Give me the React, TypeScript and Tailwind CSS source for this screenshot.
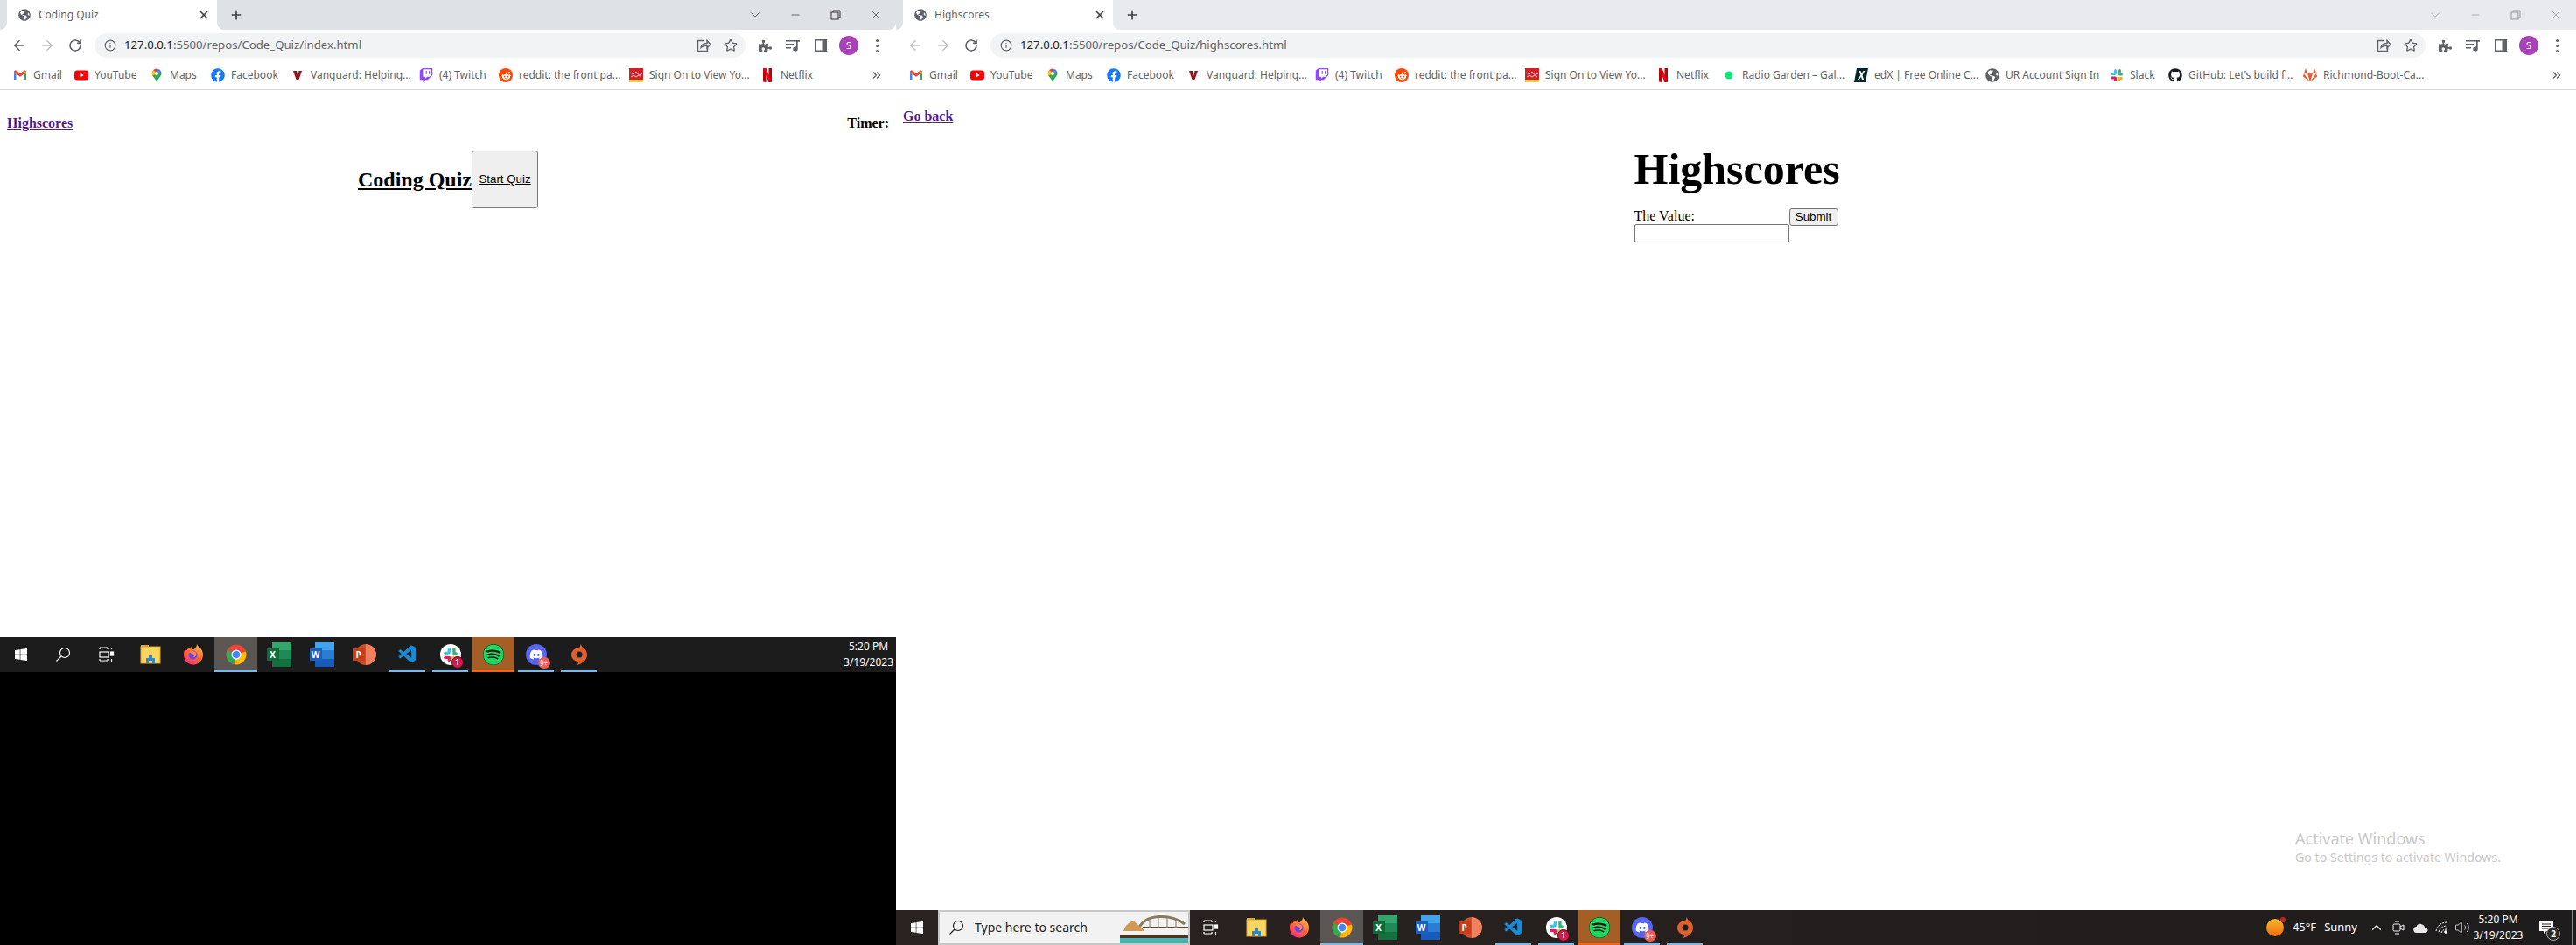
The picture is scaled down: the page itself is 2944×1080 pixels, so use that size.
import type { ReactNode } from 'react'
import { ArrowLeft, ArrowRight, ChevronDown, ChevronUp, ChevronsRight, Info, Minus, Plus, RotateCw, Star, Volume2, X } from 'lucide-react'
import { FaDiscord, FaFacebook, FaGithub, FaGitlab, FaGlobeAmericas, FaPuzzlePiece, FaRedditAlien, FaSpotify, FaTwitch, FaWindows } from 'react-icons/fa'
import { VscVscode } from 'react-icons/vsc'

function Gmail() {
  return (
    <svg width="16" height="16" viewBox="0 0 16 16">
      <path d="M1 13V4l2.500 1.500V13z" fill="#4285f4" />
      <path d="M12.500 13V5.500L15 4v9z" fill="#34a853" />
      <path d="M1 4.500C1 2.500 2.800 2 4 3l4 3 4-3c1.200-1 3-.5 3 1.500L12.500 6.500 8 9.800 3.500 6.500z" fill="#ea4335" />
      <path d="M12.500 3.300 15 4.500l-2.500 2z" fill="#fbbc04" />
    </svg>
  )
}

function YouTube() {
  return (
    <svg width="16" height="16" viewBox="0 0 16 16">
      <rect y="2.500" width="16" height="11" rx="3" fill="#ff0000" />
      <path d="M6.500 5.500v5l4.200-2.500z" fill="#fff" />
    </svg>
  )
}

function MapsPin() {
  return (
    <svg width="16" height="16" viewBox="0 0 16 16">
      <path d="M8 0.500a5.500 5.500 0 0 1 5.500 5.500L8 8z" fill="#4285f4" />
      <path d="M8 0.500A5.500 5.500 0 0 0 4 2.300L8 6z" fill="#ea4335" />
      <path d="M4 2.300A5.500 5.500 0 0 0 2.500 6c0 1 .3 1.800.8 2.600L8 6z" fill="#fbbc04" />
      <path d="M3.300 8.600 8 6l5.500 0c0 3-3.800 6-5.500 9.500C7 13 5 11 3.300 8.600z" fill="#34a853" />
      <circle cx="8" cy="6" r="2" fill="#fff" />
    </svg>
  )
}

function Vanguard() {
  return (
    <svg width="16" height="16" viewBox="0 0 16 16">
      <path d="M3 3h4l1.200 5.500L9.500 3H13l-3.500 10h-3z" fill="#96151d" />
    </svg>
  )
}

function SignOn() {
  return (
    <svg width="16" height="16" viewBox="0 0 16 16">
      <rect width="16" height="13" fill="#d71e28" />
      <rect y="13" width="16" height="3" fill="#ffcd41" />
      <path d="M1 5l4 2 3-3 3 4 4-2M2 10l3-2 3 2 3-2 3 2" stroke="#f7c9cb" strokeWidth="1" fill="none" />
    </svg>
  )
}

function NetflixN() {
  return (
    <svg width="16" height="16" viewBox="0 0 16 16">
      <path d="M3 0h3.500v16L3 15.500z" fill="#b1060f" />
      <path d="M9.500 0H13v15.500L9.500 16z" fill="#b1060f" />
      <path d="M3 0h3.500l6.500 15.500L9.500 16z" fill="#e50914" />
    </svg>
  )
}

function RadioDot() {
  return (
    <svg width="16" height="16" viewBox="0 0 16 16">
      <circle cx="8" cy="8" r="4.500" fill="#0ee57c" />
    </svg>
  )
}

function Edx() {
  return (
    <svg width="16" height="16" viewBox="0 0 16 16">
      <path d="M3 0h13l-3 16H0z" fill="#02262b" />
      <path d="M5.500 3h2l1 3 2-3h2L9.500 8l1.500 5H9L8 9.800 5.800 13h-2l3.600-5z" fill="#fff" />
    </svg>
  )
}

function SlackMark({ size = 16 }: { size?: number }) {
  return (
    <svg width={size} height={size} viewBox="0 0 16 16">
      <rect x="6" y="1" width="3" height="6" rx="1.500" fill="#36c5f0" transform="translate(-1 0)" />
      <rect x="1" y="5" width="6" height="3" rx="1.500" fill="#36c5f0" />
      <rect x="10" y="1" width="3" height="6" rx="1.500" fill="#2eb67d" />
      <rect x="10" y="5.500" width="5" height="3" rx="1.500" fill="#2eb67d" />
      <rect x="9" y="10" width="6" height="3" rx="1.500" fill="#ecb22e" />
      <rect x="9" y="10" width="3" height="5" rx="1.500" fill="#ecb22e" />
      <rect x="1" y="9.500" width="6" height="3" rx="1.500" fill="#e01e5a" />
      <rect x="5" y="9.500" width="3" height="5.500" rx="1.500" fill="#e01e5a" />
    </svg>
  )
}

function Share() {
  return (
    <svg width="18" height="18" viewBox="0 0 18 18" fill="none" stroke="#5f6368" strokeWidth="1.400">
      <path d="M9 3.500H2.500v12h11V11" />
      <path d="M6 11.500c.5-3.500 3-5 7-5V3.500l4 4.300-4 4V9c-3 0-5 .7-7 2.500z" />
    </svg>
  )
}

function MediaIcon() {
  return (
    <svg width="18" height="18" viewBox="0 0 18 18" fill="#5f6368">
      <rect x="1" y="3" width="12" height="1.500" />
      <rect x="1" y="7" width="9" height="1.500" />
      <rect x="1" y="11" width="6" height="1.500" />
      <path d="M13 3h4v1.800h-2.300V13a2.700 2.700 0 1 1-1.700-2.500z" />
    </svg>
  )
}

function SidePanel() {
  return (
    <svg width="16" height="16" viewBox="0 0 16 16">
      <rect x="1" y="1" width="14" height="14" fill="#5f6368" />
      <rect x="2.500" y="2.500" width="7" height="11" fill="#fff" />
    </svg>
  )
}

function Restore({ color }: { color: string }) {
  return (
    <svg width="12" height="12" viewBox="0 0 12 12" fill="none" stroke={color} strokeWidth="1">
      <rect x="1" y="3" width="8" height="8" />
      <path d="M3 3V1h8v8H9" />
    </svg>
  )
}

const BOOKMARKS_LEFT = [
  { name: 'Gmail', icon: <Gmail />, width: 'w-[70px]' },
  { name: 'YouTube', icon: <YouTube />, width: 'w-[86px]' },
  { name: 'Maps', icon: <MapsPin />, width: 'w-[70px]' },
  { name: 'Facebook', icon: <FaFacebook size={16} color="#1877f2" />, width: 'w-[91px]' },
  { name: 'Vanguard: Helping...', icon: <Vanguard />, width: 'w-[147px]' },
  { name: '(4) Twitch', icon: <FaTwitch size={16} color="#9146ff" />, width: 'w-[91px]' },
  { name: 'reddit: the front pa...', icon: <div className="w-4 h-4 rounded-full bg-[#ff4500] flex items-center justify-center"><FaRedditAlien size={11} color="#fff" /></div>, width: 'w-[149px]' },
  { name: 'Sign On to View Yo...', icon: <SignOn />, width: 'w-[150px]' },
  { name: 'Netflix', icon: <NetflixN />, width: 'w-[75px]' },
]

const BOOKMARKS_RIGHT = [
  { name: 'Radio Garden – Gal...', icon: <RadioDot />, width: 'w-[151px]' },
  { name: 'edX | Free Online C...', icon: <Edx />, width: 'w-[150px]' },
  { name: 'UR Account Sign In', icon: <FaGlobeAmericas size={16} color="#5f6368" />, width: 'w-[142px]' },
  { name: 'Slack', icon: <SlackMark />, width: 'w-[67px]' },
  { name: 'GitHub: Let’s build f...', icon: <FaGithub size={16} color="#161b22" />, width: 'w-[154px]' },
  { name: 'Richmond-Boot-Ca...', icon: <FaGitlab size={16} color="#e8582a" />, width: 'w-[150px]' },
]

function Browser({ title, url, active, wide, children }: { title: string; url: string; active: boolean; wide: boolean; children: ReactNode }) {
  const control = active ? '#333333' : '#9a9a9a'
  const items = wide ? [...BOOKMARKS_LEFT, ...BOOKMARKS_RIGHT] : BOOKMARKS_LEFT
  return (
    <div className="flex-1 flex flex-col bg-white font-['Noto_Sans',sans-serif] min-h-0">
      <div className="h-[34px] flex bg-white">
        <div className="w-2 bg-[#dee1e6] rounded-br-lg" />
        <div className="w-[240px] flex items-center bg-white rounded-t-lg pl-[13px] pr-2">
          <FaGlobeAmericas size={14} color="#5f6368" />
          <span className="ml-[9px] text-xs text-[#5f6368] flex-1">{title}</span>
          <X size={14} color="#444746" strokeWidth={3} />
        </div>
        <div className={active ? 'flex-1 flex items-center bg-[#dee1e6] rounded-bl-lg rounded-br-lg' : 'flex-1 flex items-center bg-[#e8eaed] rounded-bl-lg'}>
          <div className="w-11 flex justify-center">
            <Plus size={16} color="#3c4043" strokeWidth={2.500} />
          </div>
          <div className="ml-auto flex items-center">
            <div className="w-[46px] flex justify-center"><ChevronDown size={18} color={control} strokeWidth={1} /></div>
            <div className="w-[46px] flex justify-center"><Minus size={14} color={control} strokeWidth={1.200} /></div>
            <div className="w-[46px] flex justify-center"><Restore color={control} /></div>
            <div className="w-[46px] flex justify-center"><X size={16} color={control} strokeWidth={1} /></div>
          </div>
        </div>
      </div>

      <div className="h-9 flex items-center pl-[6px] pr-[6px]">
        <div className="w-8 flex justify-center"><ArrowLeft size={18} color={active ? '#5f6368' : '#bdc1c6'} strokeWidth={2} /></div>
        <div className="w-8 flex justify-center"><ArrowRight size={18} color="#bdc1c6" strokeWidth={2} /></div>
        <div className="w-8 flex justify-center"><RotateCw size={16} color="#5f6368" strokeWidth={2.500} /></div>
        <div className="ml-[6px] flex-1 h-7 rounded-full bg-[#f1f3f4] flex items-center pl-[11px] pr-[9px]">
          <Info size={14} color="#5f6368" strokeWidth={2} />
          <span className="ml-[9px] text-[13.200px] text-[#5f6368]">
            <span className="text-[#202124]">127.0.0.1</span>{url}
          </span>
          <div className="ml-auto flex items-center gap-[14px]">
            <Share />
            <Star size={16} color="#5f6368" strokeWidth={2} />
          </div>
        </div>
        <div className="ml-[6px] w-8 flex justify-center"><FaPuzzlePiece size={15} color="#5f6368" /></div>
        <div className="w-8 flex justify-center"><MediaIcon /></div>
        <div className="w-8 flex justify-center"><SidePanel /></div>
        <div className="w-8 flex justify-center">
          <div className="w-[22px] h-[22px] rounded-full bg-[#a742b8] text-white text-[11px] flex items-center justify-center">S</div>
        </div>
        <div className="w-8 flex flex-col items-center gap-[3px]">
          <div className="w-[3px] h-[3px] rounded-full bg-[#5f6368]" />
          <div className="w-[3px] h-[3px] rounded-full bg-[#5f6368]" />
          <div className="w-[3px] h-[3px] rounded-full bg-[#5f6368]" />
        </div>
      </div>

      <div className="h-[33px] flex items-center pl-[15px] pr-[15px] border-b border-[#dadce0]">
        {items.map((item) => (
          <div key={item.name} className={`${item.width} flex-none flex items-center gap-[7px]`}>
            <div className="w-4 h-4 flex-none">{item.icon}</div>
            <span className="text-xs text-[#5f6368] whitespace-nowrap">{item.name}</span>
          </div>
        ))}
        <div className="ml-auto">
          <ChevronsRight size={14} color="#5f6368" strokeWidth={2.500} />
        </div>
      </div>

      {children}
    </div>
  )
}

function Chrome() {
  return (
    <svg width="24" height="24" viewBox="0 0 24 24">
      <circle cx="12" cy="12" r="11.500" fill="#ea4335" />
      <path d="M12 12 2 6.500A11.500 11.500 0 0 0 10 23.300z" fill="#34a853" />
      <path d="M12 12l10.800-3.500A11.500 11.500 0 0 1 10 23.300z" fill="#fbbc04" />
      <circle cx="12" cy="12" r="5.500" fill="#fff" />
      <circle cx="12" cy="12" r="4.300" fill="#4285f4" />
    </svg>
  )
}

function Firefox() {
  return (
    <svg width="24" height="24" viewBox="0 0 24 24">
      <defs>
        <linearGradient id="fx" x1="0.800" y1="0" x2="0.200" y2="1">
          <stop offset="0" stopColor="#ffbd4f" />
          <stop offset="0.500" stopColor="#ff6a2b" />
          <stop offset="1" stopColor="#ff2f7e" />
        </linearGradient>
      </defs>
      <path d="M16 0c.5 2 3 3.500 5 6 2.500 3.500 2.500 8 1 11-2 4-6 6.500-10 6.500C6 23.500 1 19 1 12c0-2 .5-5 2-7 0 1 .5 2 1 2.500C5.500 5 8 3.500 10 3.500c-.5 1 0 2 1 2.500 2 .5 5-2 5-6z" fill="url(#fx)" />
      <circle cx="11.500" cy="12.500" r="5" fill="#7542e5" />
      <path d="M7 9c3-2 7-1 8 1 1 3-1 5-3 5 2-2 0-4-2-4z" fill="#ff8a3d" />
    </svg>
  )
}

function Explorer() {
  return (
    <svg width="24" height="22" viewBox="0 0 24 22">
      <path d="M1 0h9v2H1z" fill="#e0a526" />
      <rect x="1" y="2" width="22" height="19" fill="#fcd462" />
      <rect x="1" y="2" width="22" height="19" fill="none" stroke="#d8a637" />
      <path d="M7 21v-6h3v-3h4v3h3v6h-3v-3h-4v3z" fill="#2a87d3" />
    </svg>
  )
}

function Office({ back, letter, tile }: { back: string[]; letter: string; tile: string }) {
  return (
    <div className="relative w-7 h-7 flex-none">
      <div className="absolute left-[6px] top-0 right-0 bottom-0 flex flex-col">
        {back.map((c) => (
          <div key={c} className={`flex-1 ${c}`} />
        ))}
      </div>
      <div className={`absolute left-0 top-[7px] w-[14px] h-[14px] flex items-center justify-center text-white text-[10px] font-bold ${tile}`}>{letter}</div>
    </div>
  )
}

function Powerpoint() {
  return (
    <div className="relative w-7 h-7 flex-none">
      <div className="absolute left-[3px] top-[2px] w-6 h-6 rounded-full bg-[linear-gradient(90deg,#c8512e_50%,#f0805e_50%)]" />
      <div className="absolute left-0 top-[7px] w-[14px] h-[14px] flex items-center justify-center text-white text-[10px] font-bold bg-[#c43e1c]">P</div>
    </div>
  )
}

function SearchGlass({ color }: { color: string }) {
  return (
    <svg width="18" height="18" viewBox="0 0 18 18" fill="none" stroke={color} strokeWidth="1.200">
      <circle cx="11" cy="7" r="5.500" />
      <path d="M7 11 1.500 16.500" />
    </svg>
  )
}

function TaskView() {
  return (
    <svg width="18" height="18" viewBox="0 0 18 18" fill="none" stroke="#fff" strokeWidth="1.200">
      <path d="M1 1h9M10 1v2M1 3V1" />
      <rect x="1" y="6" width="10" height="6" />
      <path d="M1 16h9M10 14v2M1 14v2" />
      <rect x="13.500" y="6" width="3" height="4" fill="#fff" />
      <path d="M14.500 1v2M14.500 14v3" />
    </svg>
  )
}

function Slot({ children, bar, highlight, spotify }: { children: ReactNode; bar?: boolean; highlight?: boolean; spotify?: boolean }) {
  return (
    <div className={`relative w-[49px] h-10 flex-none flex items-center justify-center ${highlight ? 'bg-[#5a5654]' : ''} ${spotify ? 'bg-[#a55e26]' : ''}`}>
      {children}
      {bar && !highlight && !spotify && <div className="absolute bottom-0 left-1 right-1 h-[2px] bg-[#76b9ed]" />}
      {highlight && <div className="absolute bottom-0 left-0 right-0 h-[2px] bg-[#76b9ed]" />}
      {spotify && <div className="absolute bottom-0 left-0 right-0 h-[2px] bg-[#f7630c]" />}
    </div>
  )
}

function AppIcons() {
  return (
    <>
      <Slot><Explorer /></Slot>
      <Slot><Firefox /></Slot>
      <Slot highlight><Chrome /></Slot>
      <Slot><Office letter="X" tile="bg-[#0f6b3a]" back={['bg-[#33a56f]', 'bg-[#1f8a57]', 'bg-[#14703f]']} /></Slot>
      <Slot><Office letter="W" tile="bg-[#1b5ebe]" back={['bg-[#41a5ee]', 'bg-[#2b7cd3]', 'bg-[#185abd]']} /></Slot>
      <Slot><Powerpoint /></Slot>
      <Slot bar><VscVscode size={24} color="#1a8ad4" /></Slot>
      <Slot bar>
        <div className="relative w-6 h-6 rounded-full bg-white flex items-center justify-center">
          <SlackMark size={18} />
          <div className="absolute -right-[3px] -bottom-[4px] w-[14px] h-[14px] rounded-full bg-[#d01d4f] border border-[#4a0a20] text-white text-[9px] flex items-center justify-center">1</div>
        </div>
      </Slot>
      <Slot spotify>
        <div className="w-6 h-6 rounded-full bg-[#1ed760] flex items-center justify-center">
          <FaSpotify size={24} color="#1ed760" className="bg-[#191414] rounded-full" />
        </div>
      </Slot>
      <Slot bar>
        <div className="relative w-6 h-6 rounded-full bg-[#5865f2] flex items-center justify-center">
          <FaDiscord size={16} color="#fff" />
          <div className="absolute -right-[4px] -bottom-[4px] w-[14px] h-[13px] rounded-full bg-[#ed5a5a] text-white text-[8px] flex items-center justify-center">9+</div>
        </div>
      </Slot>
      <Slot bar>
        <svg width="20" height="24" viewBox="0 0 20 24">
          <path d="M11 0c.5 2 0 3-1 4C5 4 1 8 1 12c0 5 4 8 8 8 0 1.500-.5 3-1.500 4 5-1 11.500-5 11.500-12 0-4-3-8-6-9C13 2 12 1 11 0z" fill="#e0602c" />
          <circle cx="10" cy="12" r="3.500" fill="#1f1c1c" />
        </svg>
      </Slot>
    </>
  )
}

function Clock() {
  return (
    <div className="flex flex-col items-center text-xs text-white leading-[18px]">
      <span>5:20 PM</span>
      <span>3/19/2023</span>
    </div>
  )
}

function OperaHouse() {
  return (
    <svg width="78" height="36" viewBox="0 0 78 36">
      <path d="M22 18C30 2 58 2 74 14" fill="none" stroke="#8a7a60" strokeWidth="3" />
      <path d="M26 18h52" stroke="#5a4a35" strokeWidth="2" />
      <path d="M34 8v10M44 5v13M54 5v13M64 8v10" stroke="#8a7a60" strokeWidth="1" />
      <path d="M4 22 C6 14 14 10 16 10 C18 14 26 18 28 22z" fill="#d09a55" />
      <path d="M0 26h78v4H0z" fill="#4a3520" />
      <path d="M0 30h78v6H0z" fill="#44b5b0" />
    </svg>
  )
}

export default function App() {
  return (
    <div className="flex w-[2944px] h-[1080px] overflow-hidden bg-white">
      <div className="w-[1024px] flex-none flex flex-col bg-black">
        <Browser title="Coding Quiz" url=":5500/repos/Code_Quiz/index.html" active wide={false}>
          <div className="flex-1 bg-white font-['Liberation_Serif',serif] text-black">
            <div className="flex justify-between px-2 pt-[29px] text-base leading-[18px] font-bold">
              <a className="underline text-[#551a8b]">Highscores</a>
              <span>Timer:</span>
            </div>
            <div className="mt-[22px] flex items-center justify-center">
              <h2 className="text-2xl font-bold underline">Coding Quiz</h2>
              <button className="w-[76px] h-[66px] bg-[#efefef] border border-[#767676] rounded-[3px] font-['Liberation_Sans',sans-serif] text-[13.333px] underline">Start Quiz</button>
            </div>
          </div>
        </Browser>
        <div className="h-10 flex-none flex items-center bg-[#1c1c1c] font-['Noto_Sans',sans-serif]">
          <div className="w-12 flex justify-center"><FaWindows size={16} color="#fff" /></div>
          <div className="w-12 flex justify-center"><SearchGlass color="#fff" /></div>
          <div className="w-[51px] flex justify-center"><TaskView /></div>
          <AppIcons />
          <div className="ml-auto pr-[3px]"><Clock /></div>
        </div>
        <div className="h-[312px] flex-none bg-black" />
      </div>

      <div className="relative flex-1 flex flex-col">
        <Browser title="Highscores" url=":5500/repos/Code_Quiz/highscores.html" active={false} wide>
          <div className="flex-1 bg-white font-['Liberation_Serif',serif] text-black">
            <div className="px-2 pt-[21px] text-base leading-[18px] font-bold">
              <a className="underline text-[#551a8b]">Go back</a>
            </div>
            <div className="mt-[24px] flex justify-center">
              <div className="w-[233px]">
                <h1 className="text-[50px] leading-[55px] font-bold whitespace-nowrap">Highscores</h1>
                <div className="mt-[17px] flex items-start">
                  <label className="w-[177px] flex flex-col text-base leading-[18px]">
                    The Value:
                    <input className="h-[21px] border border-[#767676] rounded-[2px] bg-white" />
                  </label>
                  <button className="w-[56px] h-5 bg-[#efefef] border border-[#767676] rounded-[3px] font-['Liberation_Sans',sans-serif] text-[13.333px] leading-none">Submit</button>
                </div>
              </div>
            </div>
          </div>
        </Browser>
        <div className="h-10 flex-none flex items-center bg-gradient-to-r from-[#2b2320] to-[#1e1c1c] font-['Noto_Sans',sans-serif]">
          <div className="w-12 flex justify-center"><FaWindows size={16} color="#fff" /></div>
          <div className="w-[288px] h-10 flex items-center bg-[#f2f2f2] border-2 border-[#c8c8c8] pl-[10px] overflow-hidden">
            <SearchGlass color="#222222" />
            <span className="ml-[12px] text-sm text-[#222222]">Type here to search</span>
            <div className="ml-auto"><OperaHouse /></div>
          </div>
          <div className="w-[47px] flex justify-center"><TaskView /></div>
          <div className="w-[4px]" />
          <AppIcons />
          <div className="ml-auto flex items-center text-white">
            <div className="relative w-5 h-5 rounded-full bg-gradient-to-b from-[#f7b52a] to-[#ee6a12]">
              <div className="absolute -top-[2px] -right-[2px] w-[6px] h-[6px] rounded-full bg-[#c8231c]" />
            </div>
            <span className="ml-[10px] text-[13px]">45°F</span>
            <span className="ml-[9px] text-[13px]">Sunny</span>
            <ChevronUp className="ml-[13px]" size={18} color="#fff" strokeWidth={1.500} />
            <svg className="ml-[9px]" width="14" height="18" viewBox="0 0 14 18" fill="none" stroke="#fff" strokeWidth="1">
              <rect x="1" y="5" width="8" height="8" rx="1.500" />
              <path d="M9 8l4-2v6l-4-2M3 2h5M3 16h5" />
            </svg>
            <svg className="ml-[10px]" width="18" height="12" viewBox="0 0 18 12">
              <path d="M4 12a3.500 3.500 0 0 1-.5-7C4.500 2 7.500 1 10 2.500c2 .5 3 2 3 3.500a3 3 0 0 1 1 6z" fill="#e8e8e8" />
            </svg>
            <svg className="ml-[7px]" width="16" height="16" viewBox="0 0 16 16" fill="none" stroke="#fff" strokeWidth="1">
              <path d="M1 12C2 6 7 2 14 2M4 13c1-4 4-7 10-7M7 14c1-3 3-4 7-4" strokeDasharray="2 1" />
              <circle cx="12" cy="13" r="1.300" fill="#fff" />
            </svg>
            <Volume2 className="ml-[6px]" size={18} color="#fff" strokeWidth={1} />
            <div className="ml-px w-[62px]"><Clock /></div>
            <div className="relative ml-2 w-[32px] h-10 flex items-center justify-center">
              <svg width="16" height="16" viewBox="0 0 16 16">
                <path d="M0 1h16v11H8l-3 3v-3H0z" fill="#fff" />
                <path d="M3 4h10M3 6.500h10M3 9h7" stroke="#1e1c1c" strokeWidth="1" />
              </svg>
              <div className="absolute right-0 bottom-[5px] w-4 h-4 rounded-full bg-[#2b2b2b] border border-[#aaaaaa] text-[10px] font-bold flex items-center justify-center">2</div>
            </div>
            <div className="ml-[13px] w-px h-10 bg-[#8a8a8a]" />
            <div className="w-1" />
          </div>
        </div>

        <div className="absolute left-[1599px] top-[947px] text-[#c9c9c9] font-['Noto_Sans',sans-serif]">
          <div className="text-lg leading-[22px]">Activate Windows</div>
          <div className="text-[14.200px] leading-[22px]">Go to Settings to activate Windows.</div>
        </div>
      </div>
    </div>
  )
}
